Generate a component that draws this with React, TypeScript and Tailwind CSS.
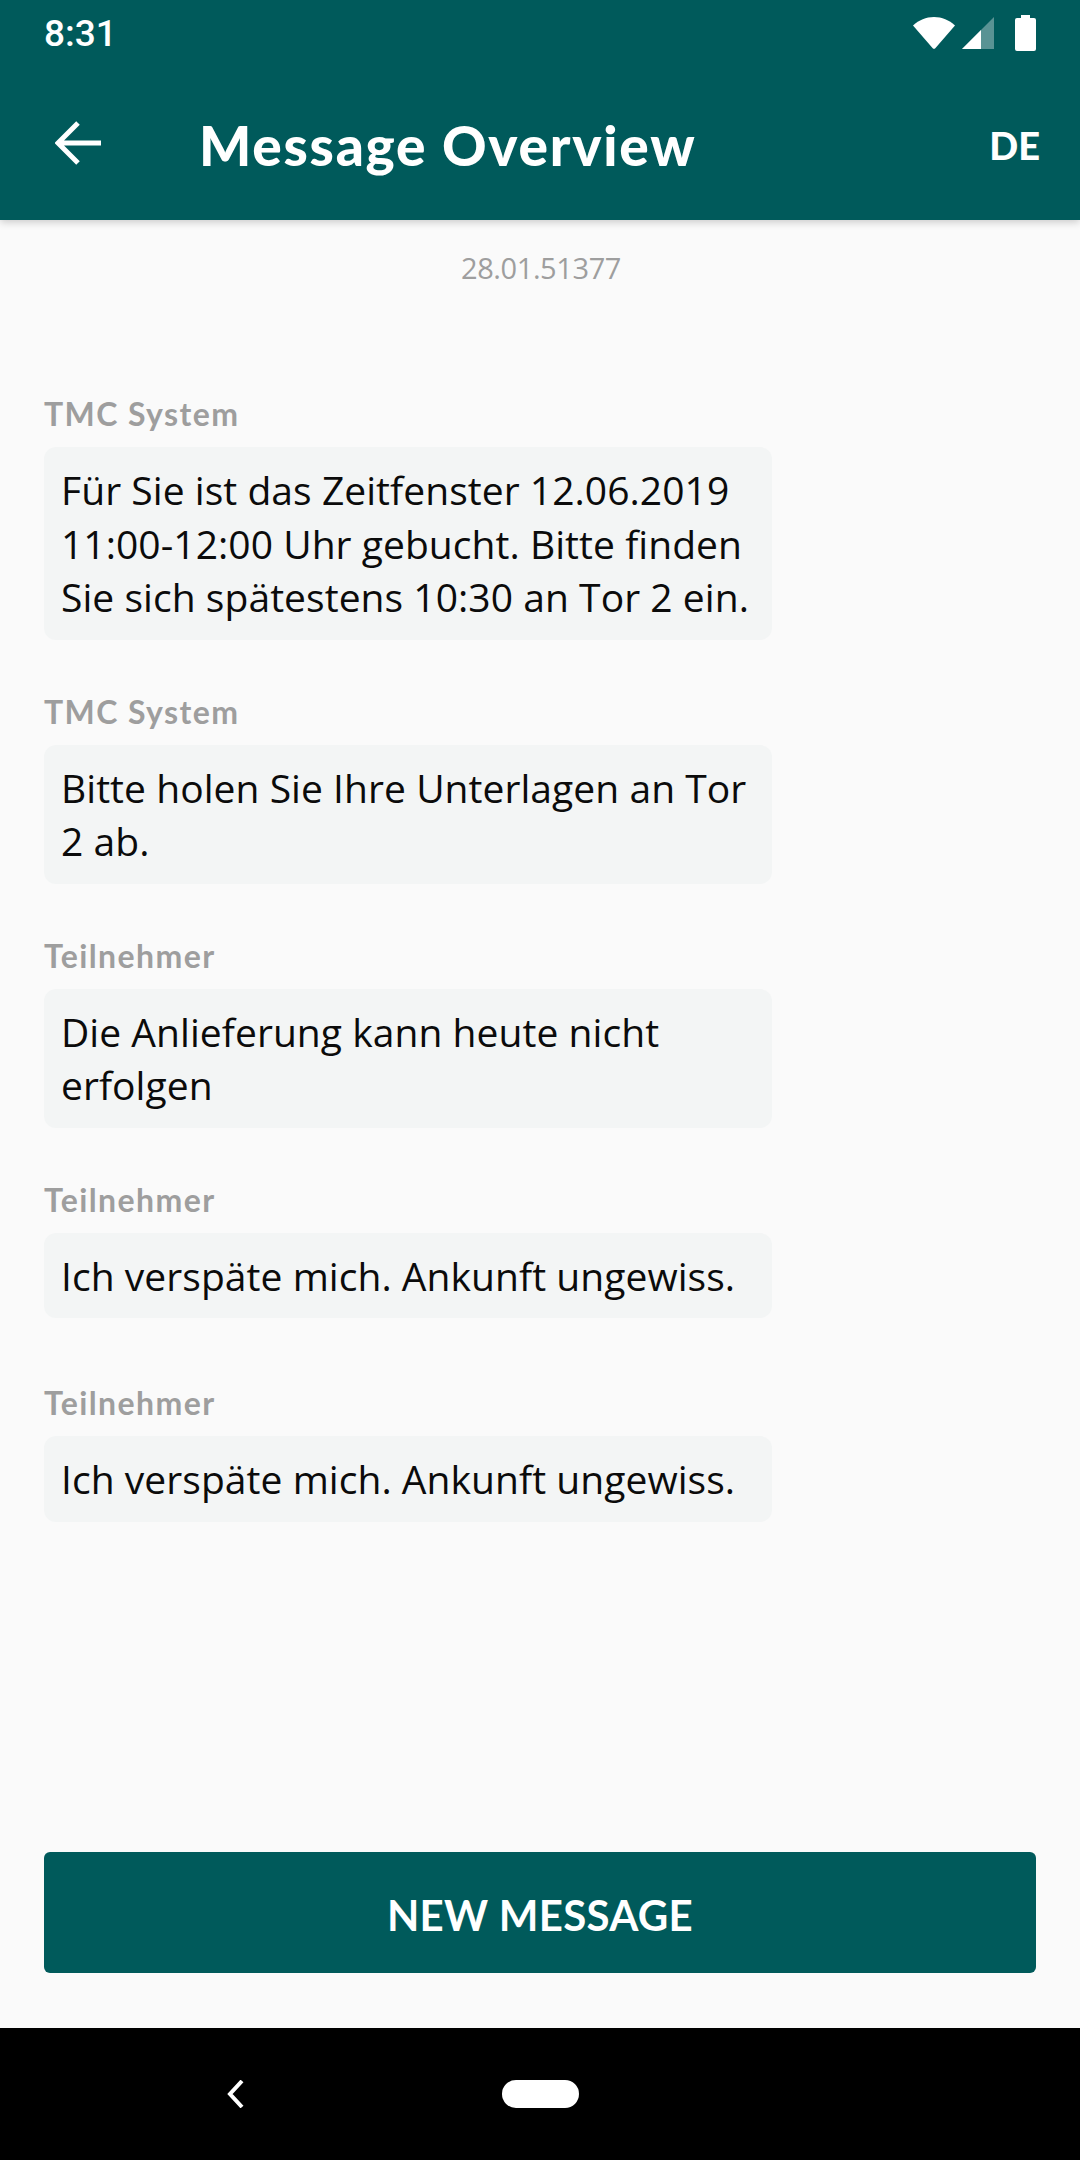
const messages = [
  { who: "TMC System", lines: "Für Sie ist das Zeitfenster 12.06.2019 11:00-12:00 Uhr gebucht. Bitte finden Sie sich spätestens 10:30 an Tor 2 ein.", mb: "mb-[52px]" },
  { who: "TMC System", lines: "Bitte holen Sie Ihre Unterlagen an Tor 2 ab.", mb: "mb-[52px]" },
  { who: "Teilnehmer", lines: "Die Anlieferung kann heute nicht erfolgen", mb: "mb-[52px]" },
  { who: "Teilnehmer", lines: "Ich verspäte mich. Ankunft ungewiss.", mb: "mb-[65px]" },
  { who: "Teilnehmer", lines: "Ich verspäte mich. Ankunft ungewiss.", mb: "mb-0" },
];

export default function App() {
  return (
    <div className="w-[1080px] h-[2160px] flex flex-col bg-[#fafafa] overflow-hidden font-['Open_Sans',sans-serif]">
      <header className="relative z-10 h-[220px] shrink-0 bg-[#005a5b] text-white shadow-[0_2px_8px_rgba(0,0,0,0.2)] flex flex-col">
        <div className="h-[66px] shrink-0 flex items-center justify-between pl-[44px] pr-[44px]">
          <span className="text-[37px] leading-none font-['Roboto',sans-serif] font-medium">8:31</span>
          <div className="flex items-center">
            <svg width="44" height="34" viewBox="0 0 44 34" className="mr-[5px]">
              <path d="M1 9.5C7 4 14 1 22 1s15 3 21 8.5L23.5 32a2 2 0 0 1-3 0Z" fill="#fff" />
            </svg>
            <svg width="34" height="34" viewBox="0 0 34 34" className="mr-[20px]">
              <path d="M33 1v32H1Z" fill="#fff" fillOpacity="0.35" />
              <path d="M20 14v19H1Z" fill="#fff" />
            </svg>
            <svg width="21" height="36" viewBox="0 0 21 36">
              <path d="M6 0h9v3h4a2 2 0 0 1 2 2v29a2 2 0 0 1-2 2H2a2 2 0 0 1-2-2V5a2 2 0 0 1 2-2h4Z" fill="#fff" />
            </svg>
          </div>
        </div>
        <div className="flex-1 flex items-center pl-[55px] pr-[40px]">
          <svg width="46" height="44" viewBox="0 0 46 44" fill="none" stroke="#fff" strokeWidth="5">
            <path d="M46 22H4M23 2 3 22l20 20" />
          </svg>
          <h1 className="ml-[98px] mt-[4px] text-[55px] leading-none font-black font-['Lato',sans-serif] tracking-[1.75px]">Message Overview</h1>
          <span className="ml-auto mt-[4px] text-[38px] leading-none font-black font-['Lato',sans-serif]">DE</span>
        </div>
      </header>

      <main className="flex-1 flex flex-col px-[44px]">
        <div className="text-center text-[29px] leading-[40px] mt-[28px] pl-[2px] text-[#9e9e9e] tracking-[-0.4px]">28.01.51377</div>
        <div className="mt-[106px] flex flex-col">
          {messages.map((m, i) => (
            <div key={i} className={m.mb}>
              <div className="text-[32px] leading-[40px] font-bold font-['Lato',sans-serif] text-[#9e9e9e] mb-[13px] tracking-[1.4px]">{m.who}</div>
              <div className="w-[728px] rounded-[12px] bg-[#f3f5f5] px-[17px] py-[16px] text-[39px] leading-[53.5px] text-[#0b0b0b] tracking-[0.05px]">
                {m.lines}
              </div>
            </div>
          ))}
        </div>
        <button className="mt-auto mb-[55px] h-[121px] w-full shrink-0 rounded-[6px] bg-[#005a5b] text-white text-[42px] pt-[6px] tracking-[0.3px] font-bold font-['Lato',sans-serif]">
          NEW MESSAGE
        </button>
      </main>

      <nav className="h-[132px] shrink-0 bg-black flex items-center pl-[227px]">
        <svg width="18" height="28" viewBox="0 0 18 28" fill="none" stroke="#fff" strokeWidth="4">
          <path d="M15 1 3 14l12 13" />
        </svg>
        <div className="ml-[257px] w-[77px] h-[28px] rounded-full bg-white" />
      </nav>
    </div>
  );
}
